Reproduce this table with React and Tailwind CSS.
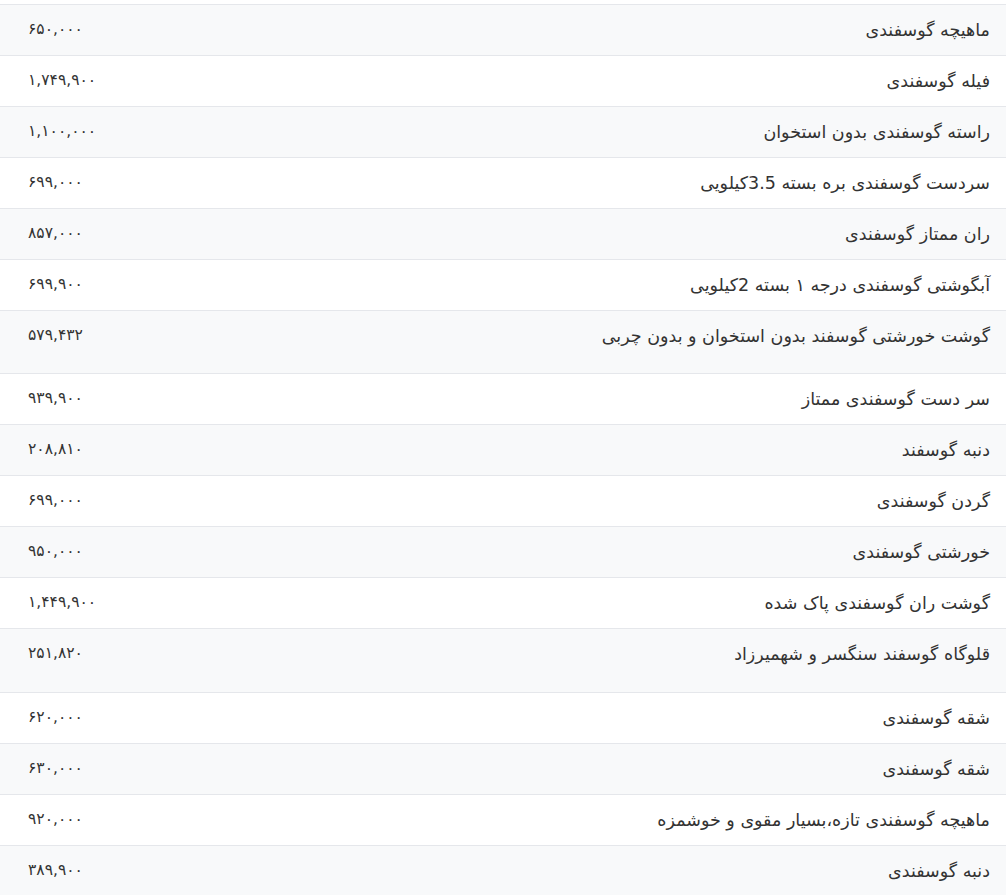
const rows = [
  { name: 'ماهیچه گوسفندی', price: '۶۵۰,۰۰۰' },
  { name: 'فیله گوسفندی', price: '۱,۷۴۹,۹۰۰' },
  { name: 'راسته گوسفندی بدون استخوان', price: '۱,۱۰۰,۰۰۰' },
  { name: 'سردست گوسفندی بره بسته 3.5کیلویی', price: '۶۹۹,۰۰۰' },
  { name: 'ران ممتاز گوسفندی', price: '۸۵۷,۰۰۰' },
  { name: 'آبگوشتی گوسفندی درجه ۱ بسته 2کیلویی', price: '۶۹۹,۹۰۰' },
  { name: 'گوشت خورشتی گوسفند بدون استخوان و بدون چربی', price: '۵۷۹,۴۳۲', tall: 'h-[63px]' },
  { name: 'سر دست گوسفندی ممتاز', price: '۹۳۹,۹۰۰' },
  { name: 'دنبه گوسفند', price: '۲۰۸,۸۱۰' },
  { name: 'گردن گوسفندی', price: '۶۹۹,۰۰۰' },
  { name: 'خورشتی گوسفندی', price: '۹۵۰,۰۰۰' },
  { name: 'گوشت ران گوسفندی پاک شده', price: '۱,۴۴۹,۹۰۰' },
  { name: 'قلوگاه گوسفند سنگسر و شهمیرزاد', price: '۲۵۱,۸۲۰', tall: 'h-[64px]' },
  { name: 'شقه گوسفندی', price: '۶۲۰,۰۰۰' },
  { name: 'شقه گوسفندی', price: '۶۳۰,۰۰۰' },
  { name: 'ماهیچه گوسفندی تازه،بسیار مقوی و خوشمزه', price: '۹۲۰,۰۰۰' },
  { name: 'دنبه گوسفندی', price: '۳۸۹,۹۰۰' },
];

export default function App() {
  return (
    <div
      dir="rtl"
      className="bg-white pt-[4px] text-[#333333]"
      style={{ fontFamily: '"DejaVu Sans", sans-serif' }}
    >
      {rows.map((row, i) => (
        <div
          key={i}
          className={`flex justify-between items-start border-t border-[#e5e7eb] pr-4 pl-7 pt-[11px] ${
            row.tall || 'h-[51px]'
          } ${i % 2 === 0 ? 'bg-[#f8f9fa]' : 'bg-white'}`}
        >
          <span className="text-[17.5px] leading-[28px]">{row.name}</span>
          <span dir="ltr" className="text-[15.5px] leading-[26px]">{row.price}</span>
        </div>
      ))}
    </div>
  );
}
